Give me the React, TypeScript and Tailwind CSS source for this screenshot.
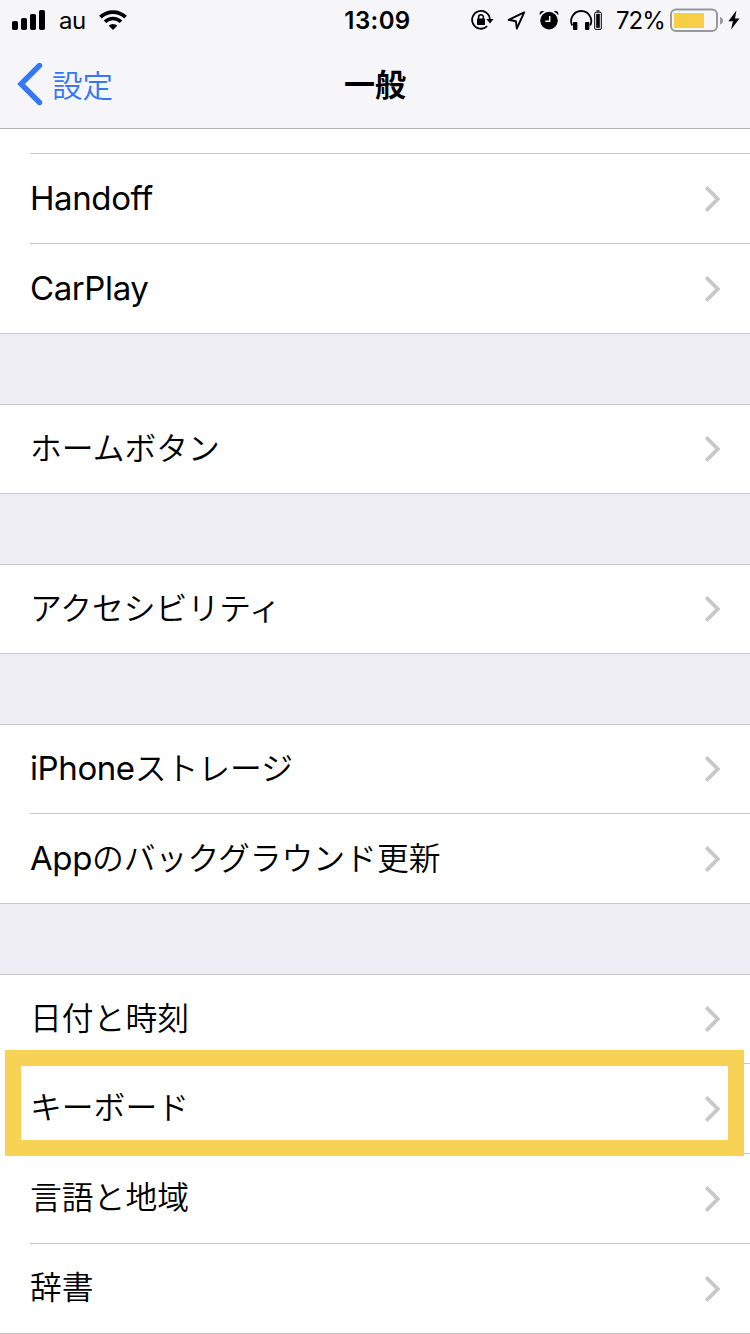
import { ReactNode } from "react";

interface RowProp {
  latin?: string;
  label?: string;
  first?: boolean;
  last?: boolean;
  marked?: boolean;
}
interface GroupProp {
  children: ReactNode;
  className?: string;
}

const Chevron = () => {
  return (
    <svg width="18" height="28" viewBox="0 0 18 28" fill="none" className="shrink-0">
      <path d="M2.2 2.4 13.8 14 2.2 25.6" stroke="#c7c7cc" strokeWidth="3.8" />
    </svg>
  );
};

const Row = ({ latin, label, first, last, marked }: RowProp) => {
  return (
    <div
      className={`relative flex pl-[30px] ${first ? "h-[89px]" : "h-[90px]"} ${
        last ? "border-b border-[#c8c7cc]" : ""
      }`}
    >
      <div
        className={`flex flex-1 items-center justify-between pr-[28px] ${
          last ? "" : "border-b border-[#c8c7cc]"
        }`}
      >
        <p className="whitespace-nowrap pt-1 leading-[44px]">
          {latin && <span className="text-[33px] tracking-[-0.4px]">{latin}</span>}
          {label && <span className="text-[31.8px] font-[350]">{label}</span>}
        </p>
        <Chevron />
      </div>
      {marked && (
        <div className="absolute left-[5px] right-[6px] -top-[14px] -bottom-[2px] border-[16px] border-[#f8d254]"></div>
      )}
    </div>
  );
};

const Group = ({ children, className = "" }: GroupProp) => {
  return <div className={`bg-white border-t border-[#c8c7cc] ${className}`}>{children}</div>;
};

const StatusBar = () => {
  return (
    <div className="grid h-10 grid-cols-[1fr_auto_1fr] items-center">
      <div className="flex items-center pl-3">
        <svg width="34" height="20" viewBox="0 0 34 20">
          <rect x="0" y="11" width="6" height="9" rx="1.8" />
          <rect x="9" y="8" width="6" height="12" rx="1.8" />
          <rect x="18" y="4" width="6" height="16" rx="1.8" />
          <rect x="27" y="0" width="6" height="20" rx="1.8" />
        </svg>
        <span className="ml-[13px] w-[27px] pt-0.5 text-[24px] tracking-[-0.4px]">au</span>
        <svg width="28" height="20" viewBox="0 0 28 20" fill="none" stroke="#000" className="ml-[13px]">
          <path d="M1.4 7.2a18 18 0 0 1 25.2 0" strokeWidth="3.8" />
          <path d="M6 11.8a11.4 11.4 0 0 1 16 0" strokeWidth="3.6" />
          <path d="M14 20l-4.3-4.3a6.1 6.1 0 0 1 8.6 0z" fill="#000" stroke="none" />
        </svg>
      </div>
      <span className="pt-0.5 pl-[5px] text-[24px] font-semibold tracking-[0.4px]">13:09</span>
      <div className="flex items-center justify-end pr-[10px]">
        <svg width="23" height="20" viewBox="0 0 23 20" fill="none" stroke="#000">
          <path d="M16.2 16.2A8.9 8.9 0 1 1 18.9 9.5" strokeWidth="1.8" />
          <path d="M15.4 9h7.2L19 13.4z" fill="#000" stroke="none" />
          <rect x="6" y="8.6" width="8" height="6.4" rx="0.8" fill="#000" stroke="none" />
          <path d="M7.6 9V7.2a2.4 2.4 0 0 1 4.8 0V9" strokeWidth="1.6" />
        </svg>
        <svg width="19" height="20" viewBox="0 0 19 20" fill="none" className="ml-[13px]">
          <path
            d="M17.2 2.4 1.6 9.8l7.3 1.5.9 7.2z"
            stroke="#000"
            strokeWidth="1.9"
            strokeLinejoin="round"
          />
        </svg>
        <svg width="20" height="20" viewBox="0 0 20 20" className="ml-[13px]">
          <circle cx="10" cy="10.6" r="8.8" />
          <path d="M.7 5.3A10.6 10.6 0 0 1 5.4 1.4L3.3.9A2.6 2.6 0 0 0 .7 3.6z" />
          <path d="M19.3 5.3a10.6 10.6 0 0 0-4.7-3.9l2.1-.5a2.6 2.6 0 0 1 2.6 2.7z" />
          <path d="M10.7 6v5.3H6.3" fill="none" stroke="#f6f6f8" strokeWidth="1.5" />
        </svg>
        <svg width="33" height="21" viewBox="0 0 33 21" className="ml-[11px]">
          <path
            d="M2.2 15.5C.7 12.5.8 9.3 2.2 6.6 4.2 2.7 7.4 1 11.2 1s7 1.7 9 5.6c1.4 2.7 1.5 5.9 0 8.9"
            fill="none"
            stroke="#000"
            strokeWidth="1.8"
          />
          <rect x="3" y="12" width="4.4" height="8" rx="1" />
          <rect x="15" y="12" width="4.4" height="8" rx="1" />
          <rect x="26.5" y="0.3" width="3" height="1.3" />
          <rect x="24.7" y="2.2" width="6.6" height="17.2" rx="1.2" fill="none" stroke="#000" />
          <rect x="26.2" y="3.8" width="3.6" height="14" />
        </svg>
        <span className="ml-[13px] w-[48px] pt-0.5 text-[24px] tracking-[-1px]">72%</span>
        <svg width="54" height="24" viewBox="0 0 54 24" className="ml-[6px]">
          <rect x="1" y="1.5" width="46" height="21.5" rx="5" fill="none" stroke="#98989d" strokeWidth="2" />
          <rect x="4" y="5" width="30" height="15" fill="#f8ce46" />
          <path d="M50 9c4 1 4 6.5 0 7.500z" fill="#98989d" />
        </svg>
        <svg width="12" height="20" viewBox="0 0 12 20" className="ml-[4px]">
          <path d="M8.4.4.4 11.2h4.5L3.1 19.6 11.5 8.5H7z" />
        </svg>
      </div>
    </div>
  );
};

const NavBar = () => {
  return (
    <div className="grid h-[88px] grid-cols-[1fr_auto_1fr] items-center">
      <div className="flex items-center pl-[17px] text-[#3478f6]">
        <svg width="26" height="44" viewBox="0 0 26 44" fill="none">
          <path
            d="M22.5 3.5 4 22l18.5 18.5"
            stroke="currentColor"
            strokeWidth="5.4"
            strokeLinecap="round"
          />
        </svg>
        <span className="ml-[9px] pt-[3px] text-[30.5px] leading-[44px] font-[350]">設定</span>
      </div>
      <h1 className="pt-0.5 text-[31px] leading-[44px] font-bold">一般</h1>
    </div>
  );
};

export default function App() {
  return (
    <div className="h-[1334px] w-[750px] overflow-hidden bg-[#efeef4] font-[Inter,'Noto_Sans_CJK_JP',sans-serif] text-black">
      <div className="border-b border-[#b2b2b4] bg-[#f6f6f8]">
        <StatusBar />
        <NavBar />
      </div>
      <div className="flex flex-col gap-[70px]">
        <div className="bg-white">
          <div className="ml-[30px] h-[25px] border-b border-[#c8c7cc]"></div>
          <Row latin="Handoff" />
          <Row latin="CarPlay" last />
        </div>
        <Group>
          <Row label="ホームボタン" first last />
        </Group>
        <Group>
          <Row label="アクセシビリティ" first last />
        </Group>
        <Group>
          <Row latin="iPhone" label="ストレージ" first />
          <Row latin="App" label="のバックグラウンド更新" last />
        </Group>
        <Group>
          <Row label="日付と時刻" first />
          <Row label="キーボード" marked />
          <Row label="言語と地域" />
          <Row label="辞書" last />
        </Group>
      </div>
    </div>
  );
}
